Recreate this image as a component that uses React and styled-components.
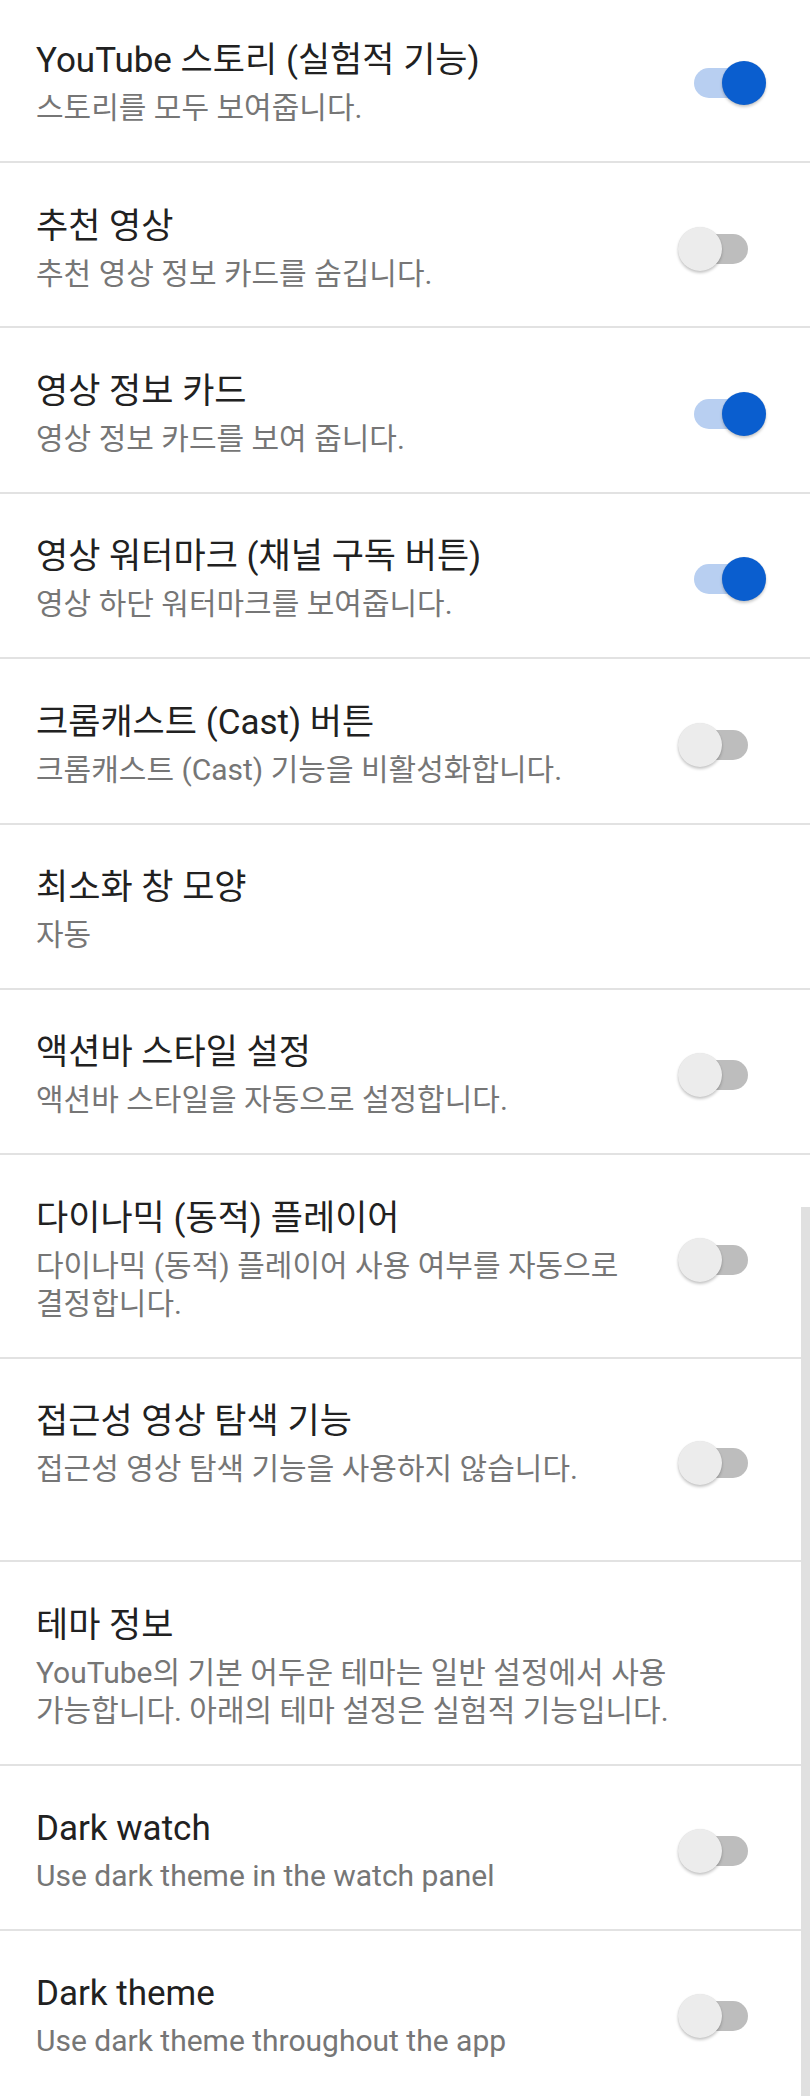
import React from "react";
import styled, { createGlobalStyle } from "styled-components";

const GlobalStyle = createGlobalStyle`
  html, body {
    margin: 0;
    padding: 0;
    background: #ffffff;
  }
  body {
    font-family: Roboto, "Noto Sans CJK KR", "Noto Sans", sans-serif;
    -webkit-font-smoothing: antialiased;
  }
`;

const Page = styled.div`
  position: relative;
  width: 810px;
  min-height: 2096px;
  overflow: hidden;
  background: #ffffff;
`;

const List = styled.ul`
  list-style: none;
  margin: -2.4px 0 0;
  padding: 0;
`;

const Row = styled.li`
  display: flex;
  align-items: center;
  gap: 24px;
  padding: 41.5px 62px 33.9px 36px;
  border-bottom: 2px solid #e2e2e2;

  &:last-child {
    border-bottom: 0;
  }
`;

const TextBlock = styled.div`
  flex: 1;
  min-width: 0;
`;

const Title = styled.div`
  color: #212121;
  font-size: 35px;
  line-height: 44px;
  white-space: nowrap;
`;

const Summary = styled.div`
  margin-top: 6px;
  color: #767676;
  font-size: 30px;
  line-height: 38px;
  white-space: pre-line;
  min-height: ${(p) => (p.$lines || 1) * 38}px;
`;

/* the track is the switch box; the thumb hangs over its ends */
const Track = styled.div`
  flex: none;
  display: flex;
  align-items: center;
  justify-content: ${(p) => (p.$on ? "flex-end" : "flex-start")};
  width: 54px;
  height: 30px;
  border-radius: 15px;
  background: ${(p) => (p.$on ? "#b8cff1" : "#bdbdbd")};
`;

const Thumb = styled.div`
  flex: none;
  width: 44px;
  height: 44px;
  margin: ${(p) => (p.$on ? "0 -17.5px 0 0" : "0 0 0 -16.5px")};
  border-radius: 50%;
  background: ${(p) => (p.$on ? "#0a5ecf" : "#ececec")};
  box-shadow: 0 2px 3px rgba(0, 0, 0, 0.22), 0 0 1px rgba(0, 0, 0, 0.12);
`;

const Scrollbar = styled.div`
  position: absolute;
  right: 0;
  top: 1207px;
  bottom: 0;
  width: 9px;
  background: #e0e0e0;
`;

const settings = [
  { title: "YouTube 스토리 (실험적 기능)", summary: "스토리를 모두 보여줍니다.", toggle: true },
  { title: "추천 영상", summary: "추천 영상 정보 카드를 숨깁니다.", toggle: false },
  { title: "영상 정보 카드", summary: "영상 정보 카드를 보여 줍니다.", toggle: true },
  { title: "영상 워터마크 (채널 구독 버튼)", summary: "영상 하단 워터마크를 보여줍니다.", toggle: true },
  { title: "크롬캐스트 (Cast) 버튼", summary: "크롬캐스트 (Cast) 기능을 비활성화합니다.", toggle: false },
  { title: "최소화 창 모양", summary: "자동" },
  { title: "액션바 스타일 설정", summary: "액션바 스타일을 자동으로 설정합니다.", toggle: false },
  {
    title: "다이나믹 (동적) 플레이어",
    summary: "다이나믹 (동적) 플레이어 사용 여부를 자동으로\n결정합니다.",
    toggle: false,
  },
  { title: "접근성 영상 탐색 기능", summary: "접근성 영상 탐색 기능을 사용하지 않습니다.", toggle: false, lines: 2 },
  {
    title: "테마 정보",
    summary: "YouTube의 기본 어두운 테마는 일반 설정에서 사용\n가능합니다. 아래의 테마 설정은 실험적 기능입니다.",
  },
  { title: "Dark watch", summary: "Use dark theme in the watch panel", toggle: false },
  { title: "Dark theme", summary: "Use dark theme throughout the app", toggle: false },
];

const Toggle = ({ on }) => (
  <Track $on={on} role="switch" aria-checked={on}>
    <Thumb $on={on} />
  </Track>
);

const SettingRow = ({ title, summary, toggle, lines }) => (
  <Row>
    <TextBlock>
      <Title>{title}</Title>
      <Summary $lines={lines}>{summary}</Summary>
    </TextBlock>
    {toggle !== undefined && <Toggle on={toggle} />}
  </Row>
);

export default function App() {
  return (
    <Page>
      <GlobalStyle />
      <List>
        {settings.map((s) => (
          <SettingRow key={s.title} {...s} />
        ))}
      </List>
      <Scrollbar />
    </Page>
  );
}
